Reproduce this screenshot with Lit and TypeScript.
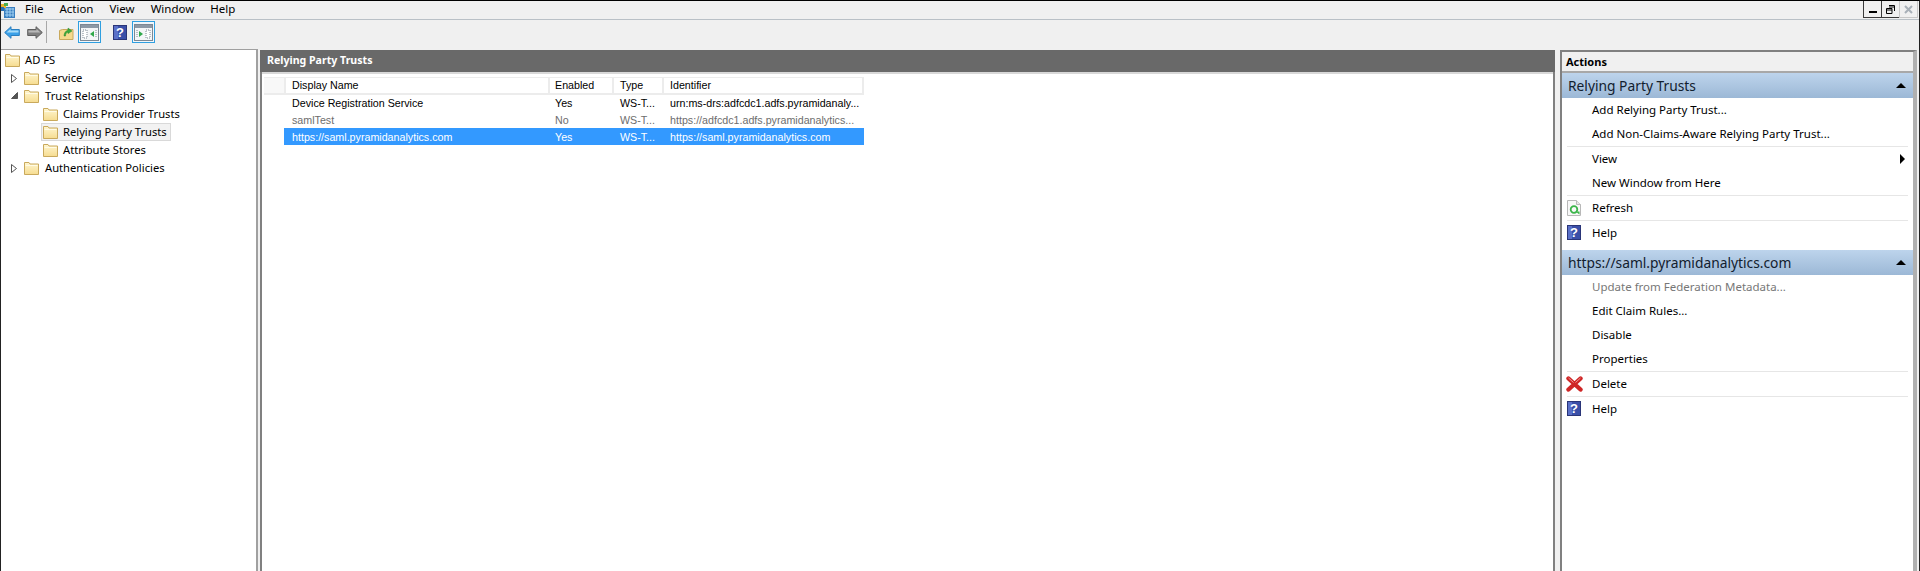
import { LitElement, html, css, svg } from "lit";
import { customElement } from "lit/decorators.js";

const folder = () => html`<svg class="ic16" width="16" height="16" viewBox="0 0 16 16">
  <defs><linearGradient id="fg" x1="0" y1="0" x2="0" y2="1"><stop offset="0" stop-color="#fff6d0"/><stop offset="1" stop-color="#f6dc90"/></linearGradient></defs>
  <path d="M.5 14.5V2.5h4.5l1 1.5h8.5v10.5z" fill="url(#fg)" stroke="#c9a95c"/>
  <path d="M1.5 5.5h12" stroke="#fffbe6"/></svg>`;

const helpIcon = () => html`<svg width="14" height="15" viewBox="0 0 14 15">
  <rect x=".5" y=".5" width="13" height="14" fill="#3a4fa8" stroke="#2a3578"/>
  <rect x="1" y="1" width="4" height="13" fill="#5a70c8"/>
  <text x="7" y="12" text-anchor="middle" class="q">?</text></svg>`;

const winIcon = (right: boolean) => html`<svg width="19" height="17" viewBox="0 0 19 17">
  <rect x=".5" y=".5" width="18" height="16" fill="#f4f6f8" stroke="#7c8894"/>
  <rect x="1" y="1" width="17" height="3" fill="#8d99a6"/>
  ${right
    ? svg`<path d="M5 7l4 3-4 3z" fill="#2fa84a"/><rect x="12" y="6" width="4" height="8" fill="#fff" stroke="#7c8894" stroke-dasharray="1 1"/><path d="M3 6v8" stroke="#7c8894" stroke-dasharray="1 1"/>`
    : svg`<path d="M14 7l-4 3 4 3z" fill="#2fa84a"/><rect x="3" y="6" width="4" height="8" fill="#fff" stroke="#7c8894" stroke-dasharray="1 1"/><path d="M16 6v8" stroke="#7c8894" stroke-dasharray="1 1"/>`}
  </svg>`;

const arrow = (c1: string, c2: string, stroke: string, flip: boolean) => html`<svg class=${flip ? "flip" : ""} width="16" height="13" viewBox="0 0 16 13">
  <path d="M.7 6.5L7 .7V3.5H15.3V9.5H7V12.3z" fill=${c1} stroke=${stroke}/>
  <path d="M2.5 6.5L6.5 3V4.5H14.5V6.5z" fill=${c2}/></svg>`;

const appIcon = () => html`<svg width="15" height="15" viewBox="0 0 15 15">
  <rect x="3" y="4" width="11" height="11" fill="#3a7fc0"/>
  <path d="M4 6h9M4 9h9M4 12h9M6 5v9M9 5v9M12 5v9" stroke="#9fd0f2"/>
  <rect x="0" y="1" width="5" height="4" fill="#e8b02a"/><rect x="3" y="0" width="4" height="3" fill="#4caf50"/>
  <rect x="0" y="4" width="3" height="4" fill="#2a6fb0"/></svg>`;

const upFolder = () => html`<svg width="15" height="15" viewBox="0 0 15 15">
  <path d="M.5 14.5V5.5l3-1h10.5v10z" fill="#f5d98c" stroke="#c9a95c"/>
  <path d="M5 11c0-3 1.5-5 4-6V3l4 3-4 2.6V7C7.5 7.6 6.5 9 6.5 11z" fill="#3caa3c" stroke="#2b8a2b" stroke-width=".5"/></svg>`;

const refreshIcon = () => html`<svg width="14" height="16" viewBox="0 0 14 16">
  <path d="M.5.5h9l4 4v11H.5z" fill="#f8f8f8" stroke="#b8b8b8"/><path d="M9.5.5v4h4" fill="#e6e6e6" stroke="#b8b8b8"/>
  <circle cx="7" cy="9.5" r="3.3" fill="none" stroke="#3cb54a" stroke-width="1.8"/>
  <path d="M8.5 11.5h4v3z" fill="#3cb54a"/></svg>`;

const deleteIcon = () => html`<svg width="17" height="16" viewBox="0 0 17 16">
  <path d="M2.5 2.5l12 11M14.5 2.5l-12 11" stroke="#cf2626" stroke-width="4.4" stroke-linecap="round"/>
  <path d="M2.5 2l5 4.5M14.5 2L9.5 6.5" stroke="#f29a9a" stroke-width="1"/></svg>`;

type Node = { label: string; level: number; exp?: "closed" | "open"; sel?: boolean };
const tree: Node[] = [
  { label: "AD FS", level: 0 },
  { label: "Service", level: 1, exp: "closed" },
  { label: "Trust Relationships", level: 1, exp: "open" },
  { label: "Claims Provider Trusts", level: 2 },
  { label: "Relying Party Trusts", level: 2, sel: true },
  { label: "Attribute Stores", level: 2 },
  { label: "Authentication Policies", level: 1, exp: "closed" },
];

const rows = [
  { c: "", v: ["Device Registration Service", "Yes", "WS-T...", "urn:ms-drs:adfcdc1.adfs.pyramidanaly..."] },
  { c: "dim", v: ["samlTest", "No", "WS-T...", "https://adfcdc1.adfs.pyramidanalytics..."] },
  { c: "sel", v: ["https://saml.pyramidanalytics.com", "Yes", "WS-T...", "https://saml.pyramidanalytics.com"] },
];

type Act = { t?: string; ic?: "r" | "h" | "d"; dis?: boolean; sub?: boolean; div?: boolean };
const act1: Act[] = [
  { t: "Add Relying Party Trust..." },
  { t: "Add Non-Claims-Aware Relying Party Trust..." },
  { div: true },
  { t: "View", sub: true },
  { t: "New Window from Here" },
  { div: true },
  { t: "Refresh", ic: "r" },
  { div: true },
  { t: "Help", ic: "h" },
];
const act2: Act[] = [
  { t: "Update from Federation Metadata...", dis: true },
  { t: "Edit Claim Rules..." },
  { t: "Disable" },
  { t: "Properties" },
  { div: true },
  { t: "Delete", ic: "d" },
  { div: true },
  { t: "Help", ic: "h" },
];

@customElement("app-root")
export class AppRoot extends LitElement {
  static styles = css`
    :host { display: block; width: 1920px; height: 571px; overflow: hidden; background: #f0f0f0;
      font-family: "Noto Sans", sans-serif; font-size: 11.5px; color: #000; }
    .frame { height: 571px; box-sizing: border-box; border-top: 1px solid #000; border-left: 1px solid #222; border-right: 1px solid #222; display: flex; flex-direction: column; }
    .menubar { height: 18px; flex: none; display: flex; align-items: center; border-bottom: 1px solid #b9c0c6; box-sizing: content-box; }
    .app { width: 24px; height: 15px; flex: none; display: flex; }
    .menu { display: flex; gap: 16px; line-height: 16px; font-size: 11.5px; padding-bottom: 2px; }
    .winbtns { margin-left: auto; margin-right: 1px; display: flex; align-self: flex-start; height: 17px; }
    .wb { width: 19px; height: 17px; box-sizing: border-box; border: 1px solid #3a3a3a; border-top: none; margin-left: -1px; display: flex; align-items: center; justify-content: center; }
    .wb.off { border-color: #c8c8c8; }
    .toolbar { height: 28px; flex: none; display: flex; align-items: center; padding: 0 0 4px 3px; box-sizing: border-box; }
    .tb { display: flex; align-items: center; justify-content: center; }
    .flip { transform: scaleX(-1); }
    .gap7 { margin-left: 7px; }
    .gap4 { margin-left: 4px; }
    .gap5 { margin-left: 5px; }
    .gap12 { margin-left: 12px; }
    .sep { width: 1px; height: 22px; background: #a8a8a8; margin: 0 12px 0 3px; }
    .tog { width: 23px; height: 22px; box-sizing: border-box; border: 1px solid #2f9fe0; background: #f0f6fb; display: flex; align-items: center; justify-content: center; }
    .main { flex: 1; min-height: 0; display: flex; }
    .left { width: 255px; flex: none; background: #fff; border-top: 1px solid #a0a0a0; border-right: 2px solid #a0a0a0; padding-top: 1px; margin-top: 1px; font-size: 11.2px; }
    .node { height: 18px; display: flex; align-items: center; line-height: 18px; white-space: nowrap; }
    .l0 { padding-left: 4px; }
    .l1 { padding-left: 10px; }
    .l2 { padding-left: 42px; }
    .exp { width: 13px; height: 9px; flex: none; display: flex; }
    .ic16 { flex: none; display: block; }
    .lbl { margin-left: 4px; }
    .l1 .lbl { margin-left: 5px; }
    .selbox { display: flex; align-items: center; height: 18px; margin-left: -2px; padding: 0 3px 0 1px; box-sizing: border-box; background: #f2f2f2; border: 1px solid #d9d9d9; }
    .mid { margin: 2px 0 0 2px; width: 1295px; flex: none; background: #fff; border-left: 2px solid #808080; border-right: 2px solid #808080; display: flex; flex-direction: column; box-sizing: border-box; }
    .midhead { height: 22px; flex: none; margin: 0 -2px; background: #696969; color: #fff; font-weight: 700; font-size: 10.6px; line-height: 21px; padding-left: 7px; }
    .midsep { height: 2px; flex: none; background: #d8d8d8; border-bottom: 1px solid #fff; }
    .list { flex: 1; font-family: "Liberation Sans", sans-serif; font-size: 10.7px; padding: 2px 0 0 2px; }
    .lrow { display: grid; grid-template-columns: 20px 266px 64px 50px 200px; height: 17px; line-height: 19px; white-space: nowrap; }
    .lrow.lhead { grid-template-columns: 22px 264px 64px 50px 200px; }
    .lhead > div { background: #fff; border: 2px solid #ececec; border-left: 0; border-top-width: 1px; box-sizing: border-box; padding-left: 6px; line-height: 15px; }
    .lhead > div:first-child { background: #f8f8f8; }
    .lhead > div:nth-child(3) { padding-left: 5px; }
    .cell { padding-left: 6px; overflow: hidden; }
    .cell:nth-child(2) { padding-left: 8px; }
    .cell:nth-child(3) { padding-left: 5px; }
    .lrow.dim .cell { color: #6d6d6d; }
    .lrow.sel .cell { background: #3399ff; color: #fff; }
    .lrow.sel .cell:first-child { background: none; }
    .right { margin: 2px 0 0 5px; width: 357px; flex: none; background: #fff; border-left: 2px solid #808080; border-right: 4px solid #b0b0b0; box-sizing: border-box; border-top: 2px solid #808080; }
    .acthead { height: 19px; background: #f0f0f0; border-bottom: 2px solid #a8a8a8; font-weight: 700; font-size: 11px; line-height: 19px; padding-left: 4px; }
    .sect { height: 25px; display: flex; align-items: center; justify-content: space-between; background: linear-gradient(#bdd4ec, #9cb8d6); font-size: 13.8px; padding: 0 7px 0 6px; color: #12202e; }
    .tri { width: 0; height: 0; border-left: 5px solid transparent; border-right: 5px solid transparent; border-bottom: 5px solid #000; }
    .acts { padding-bottom: 5px; }
    .act { height: 24px; display: flex; align-items: center; position: relative; padding-left: 30px; line-height: 24px; }
    .act.dis { color: #777; }
    .aic { position: absolute; left: 5px; top: 4px; display: flex; }
    .aic.d { left: 4px; }
    .arrow { position: absolute; right: 8px; top: 7px; width: 0; height: 0; border-top: 5px solid transparent; border-bottom: 5px solid transparent; border-left: 5px solid #000; }
    .div { height: 1px; background: #e6e6e6; margin: 0 5px; }
    .q { font: 700 13px "Liberation Sans", sans-serif; fill: #fff; }
  `;

  private exp(k?: string) {
    if (k === "closed") return html`<span class="exp"><svg width="6" height="9" viewBox="0 0 6 9"><path d="M.5.5l5 4-5 4z" fill="#fff" stroke="#555"/></svg></span>`;
    if (k === "open") return html`<span class="exp"><svg width="7" height="7" viewBox="0 0 7 7"><path d="M6.5.5v6h-6z" fill="#555" stroke="#555"/></svg></span>`;
    return null;
  }

  private act(a: Act) {
    if (a.div) return html`<div class="div"></div>`;
    return html`<div class="act ${a.dis ? "dis" : ""}">
      ${a.ic ? html`<span class="aic ${a.ic}">${a.ic === "r" ? refreshIcon() : a.ic === "h" ? helpIcon() : deleteIcon()}</span>` : null}
      ${a.t}${a.sub ? html`<span class="arrow"></span>` : null}</div>`;
  }

  render() {
    return html`<div class="frame">
      <div class="menubar">
        <span class="app">${appIcon()}</span>
        <div class="menu"><span>File</span><span>Action</span><span>View</span><span>Window</span><span>Help</span></div>
        <div class="winbtns">
          <span class="wb"><svg width="8" height="8" viewBox="0 0 8 8"><rect x="0" y="6" width="8" height="2"/></svg></span>
          <span class="wb"><svg width="9" height="9" viewBox="0 0 9 9"><path d="M3 .5h5.5v5.5M3 2h5.5M.5 3.5h5.5v5H.5zM.5 5H6" fill="none" stroke="#000"/></svg></span>
          <span class="wb off"><svg width="9" height="9" viewBox="0 0 9 9"><path d="M1 1l7 7M8 1L1 8" stroke="#a8b0b8" stroke-width="2"/></svg></span>
        </div>
      </div>
      <div class="toolbar">
        <span class="tb">${arrow("#3aa0e8", "#a8dcf8", "#2a7fc0", false)}</span>
        <span class="tb gap7">${arrow("#808080", "#b8b8b8", "#5e5e5e", true)}</span>
        <span class="sep"></span>
        <span class="tb">${upFolder()}</span>
        <span class="tog gap4">${winIcon(false)}</span>
        <span class="tb gap12">${helpIcon()}</span>
        <span class="tog gap5">${winIcon(true)}</span>
      </div>
      <div class="main">
        <div class="left">
          ${tree.map((n) => html`<div class="node l${n.level}">
            ${this.exp(n.exp)}
            ${n.sel
              ? html`<span class="selbox">${folder()}<span class="lbl">${n.label}</span></span>`
              : html`${folder()}<span class="lbl">${n.label}</span>`}
          </div>`)}
        </div>
        <div class="mid">
          <div class="midhead">Relying Party Trusts</div>
          <div class="midsep"></div>
          <div class="list">
            <div class="lrow lhead"><div></div><div>Display Name</div><div>Enabled</div><div>Type</div><div>Identifier</div></div>
            ${rows.map((r) => html`<div class="lrow ${r.c}"><div class="cell"></div>${r.v.map((v) => html`<div class="cell">${v}</div>`)}</div>`)}
          </div>
        </div>
        <div class="right">
          <div class="acthead">Actions</div>
          <div class="sect">Relying Party Trusts<span class="tri"></span></div>
          <div class="acts">${act1.map((a) => this.act(a))}</div>
          <div class="sect">https://saml.pyramidanalytics.com<span class="tri"></span></div>
          <div class="acts">${act2.map((a) => this.act(a))}</div>
        </div>
      </div>
    </div>`;
  }
}
